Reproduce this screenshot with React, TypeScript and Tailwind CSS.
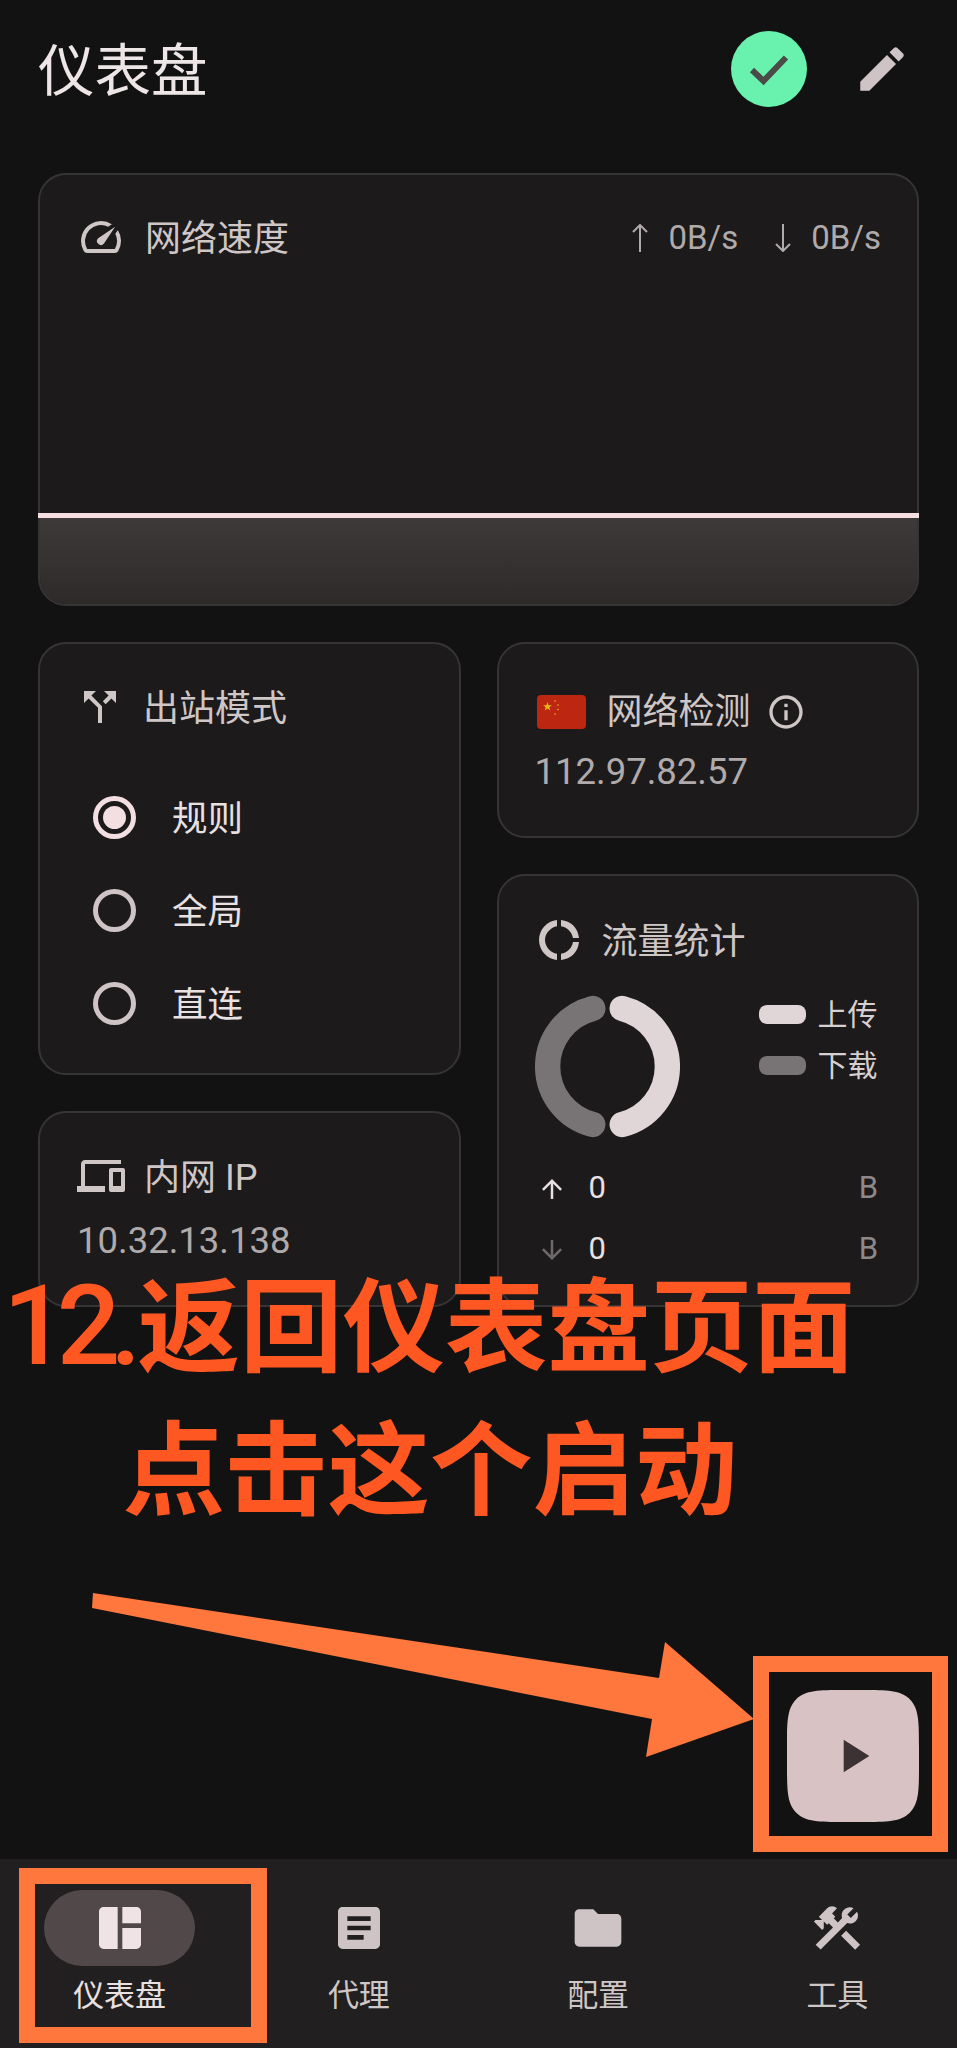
import React from 'react';

const Icon: React.FC<{ d: string; className: string }> = ({ d, className }) => (
    <svg viewBox="0 0 24 24" fill="currentColor" className={className}>
        <path d={d} />
    </svg>
);

const ICONS = {
    edit: 'M3 17.25V21h3.75L17.81 9.94l-3.75-3.75L3 17.25zM20.71 7.04c.39-.39.39-1.02 0-1.41l-2.34-2.34c-.39-.39-1.02-.39-1.41 0l-1.83 1.83 3.75 3.75 1.83-1.83z',
    speed: 'M20.38 8.57l-1.23 1.85a8 8 0 0 1-.22 7.58H5.07A8 8 0 0 1 15.58 6.85l1.85-1.23A10 10 0 0 0 3.35 19a2 2 0 0 0 1.72 1h13.85a2 2 0 0 0 1.74-1 10 10 0 0 0-.27-10.44zm-9.79 6.84a2 2 0 0 0 2.83 0l5.66-8.49-8.49 5.66a2 2 0 0 0 0 2.83z',
    split: 'M14 4l2.29 2.29-2.88 2.88 1.42 1.42 2.88-2.88L20 10V4zm-4 0H4v6l2.29-2.29 4.71 4.7V20h2v-8.41l-5.29-5.3z',
    devices: 'M4 6h18V4H4c-1.1 0-2 .9-2 2v11H0v3h14v-3H4V6zm19 2h-6c-.55 0-1 .45-1 1v10c0 .55.45 1 1 1h6c.55 0 1-.45 1-1V9c0-.55-.45-1-1-1zm-1 9h-4v-7h4v7z',
    info: 'M11 7h2v2h-2zm0 4h2v6h-2zm1-9C6.48 2 2 6.48 2 12s4.48 10 10 10 10-4.48 10-10S17.52 2 12 2zm0 18c-4.41 0-8-3.59-8-8s3.59-8 8-8 8 3.59 8 8-3.59 8-8 8z',
    donut: 'M11 5.08V2c-5 .5-9 4.81-9 10s4 9.5 9 10v-3.08c-3-.48-6-3.4-6-6.92s3-6.44 6-6.92zM18.97 11H22c-.47-5-4-8.53-9-9v3.08C16 5.51 18.54 8 18.97 11zM13 18.92V22c5-.47 8.53-4 9-9h-3.03c-.43 3-2.97 5.49-5.97 5.92z',
    dashboard: 'M11 21H5c-1.1 0-2-.9-2-2V5c0-1.1.9-2 2-2h6v18zm2 0h6c1.1 0 2-.9 2-2v-7h-8v9zm8-11V5c0-1.1-.9-2-2-2h-6v7h8z',
    article: 'M19 3H5c-1.1 0-2 .9-2 2v14c0 1.1.9 2 2 2h14c1.1 0 2-.9 2-2V5c0-1.1-.9-2-2-2zm-5 14H7v-2h7v2zm3-4H7v-2h10v2zm0-4H7V7h10v2z',
    folder: 'M10 4H4c-1.1 0-1.99.9-1.99 2L2 18c0 1.1.9 2 2 2h16c1.1 0 2-.9 2-2V8c0-1.1-.9-2-2-2h-8l-2-2z',
    tools: 'M13.78 15.3L19.78 21.3L21.89 19.14L15.89 13.14L13.78 15.3M17.5 10.1C17.11 10.1 16.69 10.05 16.36 9.91L4.97 21.25L2.86 19.14L10.27 11.74L8.5 9.96L7.78 10.66L6.33 9.25V12.11L5.63 12.81L2.11 9.25L2.81 8.55H5.62L4.22 7.14L7.78 3.58C8.95 2.41 10.83 2.41 12 3.58L9.89 5.74L11.3 7.14L10.59 7.85L12.38 9.63L14.2 7.75C14.06 7.42 14 7 14 6.63C14 4.66 15.56 3.11 17.5 3.11C18.09 3.11 18.61 3.25 19.08 3.53L16.41 6.2L17.91 7.7L20.58 5.03C20.86 5.5 21 6 21 6.63C21 8.55 19.45 10.1 17.5 10.1Z',
    up: 'M4 12l1.41 1.41L11 7.83V20h2V7.83l5.58 5.59L20 12l-8-8-8 8z',
    down: 'M20 12l-1.41-1.41L13 16.17V4h-2v12.17l-5.58-5.59L4 12l8 8 8-8z',
    play: 'M8 5v14l11-7z',
};

const Card: React.FC<{ className: string; children: React.ReactNode }> = ({ className, children }) => (
    <div className={`rounded-[28px] border-2 border-[#363435] bg-[#1c1a1b] ${className}`}>{children}</div>
);

// CJK card titles sit a little lower than their icon
const Title: React.FC<{ children: React.ReactNode }> = ({ children }) => (
    <span className="pt-[4px] text-[36px] leading-[40px] whitespace-nowrap text-[#cfc6c6]">{children}</span>
);

const Radio: React.FC<{ label: string; selected?: boolean }> = ({ label, selected }) => (
    <div className="flex h-[93px] items-center gap-[36px]">
        <div
            className={`flex h-[43px] w-[43px] items-center justify-center rounded-full border-[5px] ${
                selected ? 'border-[#f3dfe2]' : 'border-[#cfc4c5]'
            }`}
        >
            {selected && <div className="h-[23px] w-[23px] rounded-full bg-[#f3dfe2]" />}
        </div>
        <span className="pt-[2px] text-[35.5px] leading-[44px] text-[#e9e0e1]">{label}</span>
    </div>
);

const NAV = [
    { label: '仪表盘', d: ICONS.dashboard, active: true },
    { label: '代理', d: ICONS.article },
    { label: '配置', d: ICONS.folder },
    { label: '工具', d: ICONS.tools },
];

export default function App() {
    return (
        <div className="relative flex h-[2048px] w-[957px] flex-col overflow-hidden bg-[#131213] font-[Roboto,'Noto_Sans_CJK_SC',sans-serif]">
            <main className="flex-1 px-[38px] pt-[31px]">
                {/* Header */}
                <div className="mb-[66px] flex h-[76px] items-center justify-between pr-[8px]">
                    <h1 className="pt-[6px] text-[56.5px] leading-[76px] font-normal text-[#eee6e6]">仪表盘</h1>
                    <div className="flex items-center gap-[46px]">
                        <div className="flex h-[76px] w-[76px] items-center justify-center rounded-full bg-[#68f2ae]">
                            <svg viewBox="0 0 76 76" className="h-[76px] w-[76px]" fill="none" stroke="#4a4b48" strokeWidth="6">
                                <path d="M21 39l11.5 11L55 26.5" />
                            </svg>
                        </div>
                        <Icon d={ICONS.edit} className="h-[58px] w-[58px] text-[#cfc4c5]" />
                    </div>
                </div>

                {/* Network speed */}
                <Card className="flex h-[433px] flex-col">
                    <div className="flex h-[82px] items-start justify-between pt-[42px] pr-[36px] pl-[37px]">
                        <div className="flex h-[40px] items-center gap-[20px]">
                            <Icon d={ICONS.speed} className="h-[48px] w-[48px] text-[#cfc6c6]" />
                            <Title>网络速度</Title>
                        </div>
                        <div className="flex h-[40px] items-center pt-[2px] text-[33px] leading-[40px] text-[#b0aaab]">
                            <svg viewBox="0 0 18 28" className="mr-[19px] h-[28px] w-[18px]" fill="none" stroke="currentColor" strokeWidth="2">
                                <path d="M9 28V1M2 8l7-7 7 7" />
                            </svg>
                            <span>0B/s</span>
                            <svg viewBox="0 0 18 28" className="mr-[19px] ml-[36px] h-[28px] w-[18px]" fill="none" stroke="currentColor" strokeWidth="2">
                                <path d="M9 0v27M2 20l7 7 7-7" />
                            </svg>
                            <span>0B/s</span>
                        </div>
                    </div>
                    <div className="flex-1" />
                    <div className="mx-[-2px] h-[5px] bg-[#f5dfe0]" />
                    <div className="h-[86px] rounded-b-[26px] bg-gradient-to-b from-[#3f3a3a] to-[#2e2a2a]" />
                </Card>

                <div className="mt-[36px] grid grid-cols-2 gap-x-[36px]">
                    {/* Left column */}
                    <div className="flex flex-col gap-[36px]">
                        <Card className="h-[433px] pt-[43px] pl-[36px]">
                            <div className="flex h-[40px] items-center gap-[19px]">
                                <Icon d={ICONS.split} className="h-[48px] w-[48px] text-[#cfc6c6]" />
                                <Title>出站模式</Title>
                            </div>
                            <div className="mt-[44px] pl-[17px]">
                                <Radio label="规则" selected />
                                <Radio label="全局" />
                                <Radio label="直连" />
                            </div>
                        </Card>
                        <Card className="h-[196px] pt-[43px] pl-[37px]">
                            <div className="flex h-[40px] items-center gap-[19px]">
                                <Icon d={ICONS.devices} className="h-[48px] w-[48px] text-[#cfc6c6]" />
                                <Title>内网 IP</Title>
                            </div>
                            <div className="mt-[23px] text-[36.5px] leading-[44px] text-[#b0aaab]">10.32.13.138</div>
                        </Card>
                    </div>

                    {/* Right column */}
                    <div className="flex flex-col gap-[36px]">
                        <Card className="h-[196px] pt-[48px] pl-[36px]">
                            <div className="flex h-[40px] items-center">
                                <svg viewBox="0 0 49 34" className="ml-[2px] h-[34px] w-[49px] rounded-[4px]">
                                    <rect width="49" height="34" fill="#bd2711" />
                                    <path d="M10.5 7l1.1 3.2 3.4.1-2.7 2 1 3.3-2.8-2-2.8 2 1-3.3-2.7-2 3.4-.1z" fill="#e8b81a" />
                                    <circle cx="18" cy="6" r=".8" fill="#e8b81a" />
                                    <circle cx="21" cy="10" r=".8" fill="#e8b81a" />
                                    <circle cx="21" cy="14.5" r=".8" fill="#e8b81a" />
                                    <circle cx="18" cy="19" r=".8" fill="#e8b81a" />
                                </svg>
                                <span className="ml-[21px]">
                                    <Title>网络检测</Title>
                                </span>
                                <Icon d={ICONS.info} className="ml-[15px] h-[40px] w-[40px] text-[#cfc6c6]" />
                            </div>
                            <div className="mt-[18px] text-[36.5px] leading-[44px] text-[#b0aaab]">112.97.82.57</div>
                        </Card>
                        <Card className="h-[433px] pt-[44px] pr-[39px] pl-[36px]">
                            <div className="flex h-[40px] items-center gap-[19px]">
                                <Icon d={ICONS.donut} className="h-[48px] w-[48px] text-[#cfc6c6]" />
                                <Title>流量统计</Title>
                            </div>
                            <div className="mt-[34px] flex">
                                <svg viewBox="0 0 143 143" className="h-[145px] w-[145px] shrink-0" fill="none" strokeWidth="25" strokeLinecap="round">
                                    <path d="M86 14.3A59 59 0 0 1 86 128.7" stroke="#e0d5d7" />
                                    <path d="M57 14.3A59 59 0 0 0 57 128.7" stroke="#787374" />
                                </svg>
                                <div className="ml-[79px] flex flex-col gap-[11px]">
                                    {[
                                        { label: '上传', color: 'bg-[#e0d5d7]' },
                                        { label: '下载', color: 'bg-[#787374]' },
                                    ].map(({ label, color }) => (
                                        <div key={label} className="flex h-[40px] items-center gap-[12px]">
                                            <div className={`h-[19px] w-[47px] shrink-0 rounded-[8px] ${color}`} />
                                            <span className="pt-[2px] text-[30px] leading-[40px] whitespace-nowrap text-[#d8cfd0]">{label}</span>
                                        </div>
                                    ))}
                                </div>
                            </div>
                            <div className="mt-[19px]">
                                <div className="flex h-[61px] items-center justify-between">
                                    <div className="flex items-center gap-[22px] pl-[2px]">
                                        <Icon d={ICONS.up} className="h-[30px] w-[30px] text-[#e9e0e1]" />
                                        <span className="text-[31px] text-[#e9e0e1]">0</span>
                                    </div>
                                    <span className="text-[31px] text-[#8e8889]">B</span>
                                </div>
                                <div className="flex h-[61px] items-center justify-between">
                                    <div className="flex items-center gap-[22px] pl-[2px]">
                                        <Icon d={ICONS.down} className="h-[30px] w-[30px] text-[#6e696a]" />
                                        <span className="text-[31px] text-[#e9e0e1]">0</span>
                                    </div>
                                    <span className="text-[31px] text-[#8e8889]">B</span>
                                </div>
                            </div>
                        </Card>
                    </div>
                </div>
            </main>

            {/* Bottom nav */}
            <nav className="grid h-[189px] grid-cols-4 bg-[#211f20] pt-[31px]">
                {NAV.map(({ label, d, active }) => (
                    <div key={label} className="flex flex-col items-center">
                        <div className={`flex h-[76px] w-[151px] items-center justify-center rounded-full ${active ? 'bg-[#504849]' : ''}`}>
                            <Icon d={d} className={`h-[56px] w-[56px] ${active ? 'text-[#efe3e5]' : 'text-[#cfc4c5]'}`} />
                        </div>
                        <span className={`mt-[10px] text-[31px] leading-[40px] ${active ? 'text-[#e9e0e1]' : 'text-[#cfc6c6]'}`}>{label}</span>
                    </div>
                ))}
            </nav>

            {/* Start button */}
            <div className="absolute top-[1690px] left-[787px] flex h-[132px] w-[132px] items-center justify-center rounded-[58px] bg-[#d8c2c3] [corner-shape:squircle]">
                <Icon d={ICONS.play} className="h-[56px] w-[56px] text-[#3d3233]" />
            </div>

            {/* Tutorial annotations */}
            <div className="absolute top-[1256px] left-[12px] w-[836px] text-center text-[102.5px] leading-[140px] font-semibold text-[#ff5722]">
                <div className="ml-[-9px] text-left whitespace-nowrap">
                    <span className="mr-[6px] text-[112px] font-medium tracking-[-10px]">12.</span>返回仪表盘页面
                </div>
                <div className="mt-[3px] whitespace-nowrap">点击这个启动</div>
            </div>
            <svg viewBox="0 0 957 2048" className="pointer-events-none absolute inset-0 h-[2048px] w-[957px]">
                <polygon points="93,1593 92,1608 652,1719 646,1757 754,1719 665,1642 659,1678" fill="#ff773d" />
            </svg>
            <div className="absolute top-[1656px] left-[753px] h-[196px] w-[195px] border-[16px] border-[#ff773d]" />
            <div className="absolute top-[1868px] left-[19px] h-[175px] w-[248px] border-[16px] border-[#ff773d]" />
        </div>
    );
}
